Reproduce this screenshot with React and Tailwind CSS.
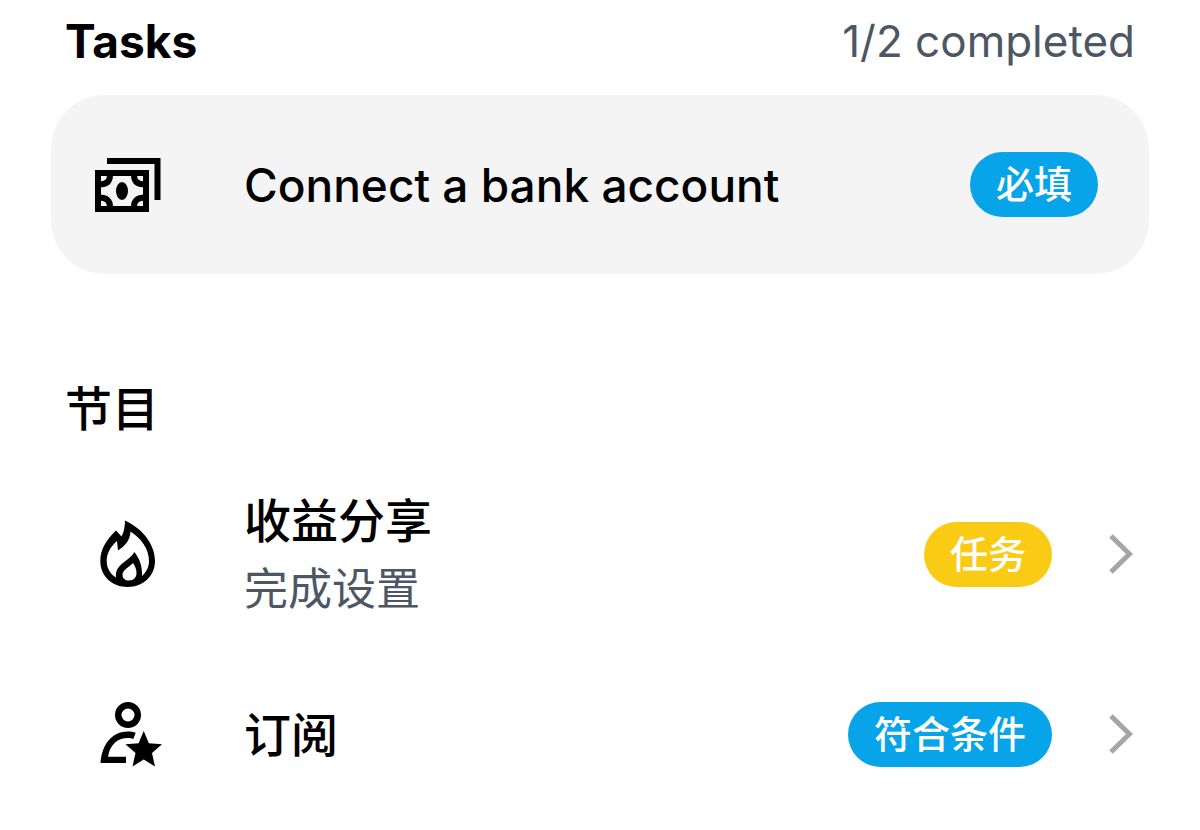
import clsx from 'clsx';

const CashIcon = () => (
  <svg viewBox="0 0 72 72" className="w-[72px] h-[72px] shrink-0" fill="none" stroke="currentColor" strokeWidth="6" aria-hidden="true">
    <path d="M15 12H65.5V51" />
    <path d="M6 24H54V60H6Z" />
    <path d="M18 26C18 32 15 35.500 7 35.500M42 26C42 32 45 35.500 53 35.500M18 58C18 52 15 48.500 7 48.500M42 58C42 52 45 48.500 53 48.500" />
    <ellipse cx="30" cy="42" rx="6" ry="9" fill="currentColor" stroke="none" />
  </svg>
);

const FlameIcon = () => (
  <svg viewBox="0 0 72 72" className="w-[72px] h-[72px] shrink-0" fill="currentColor" aria-hidden="true">
    <path
      fillRule="evenodd"
      d="M33 2.500C49 10 63 25 63 43C63 58 51 69 35.700 69C20 69 8.300 58 8.300 43C8.300 31 15 21 24 12.500L29.500 18.500C32 14 33 8 33 2.500ZM38.500 13.500C38 22 34 27 26 32.500L25 23C18 29 14.700 36 14.700 43C14.700 50 18 56 24 59.500C23 45 36 45 42.300 34C47 40 50.500 47 50 58C54.500 54 57 49 57 43C57 31 49 20 38.500 13.500ZM41 45C36 50 30.500 52 30.500 57C30.500 60.500 33 62.500 37 62.500C42 62.500 44.500 59 44.500 55C44.500 51 43 48 41 45Z"
    />
  </svg>
);

const SubscriberIcon = () => (
  <svg viewBox="0 0 72 72" className="w-[72px] h-[72px] shrink-0" fill="currentColor" aria-hidden="true">
    <circle cx="36" cy="17" r="9.75" fill="none" stroke="currentColor" strokeWidth="6.5" />
    <path d="M8.500 65C10 46 20 33.500 36 33.500C39 33.500 41.500 34 43.700 34.700L41.300 41C39.500 40.300 38 40 36 40C25 40 18 47 16 58.700H34V65Z" />
    <path d="M51.700 33L56.900 45.300L70 46.300L60 55L63 68.500L51.700 61.500L40.500 68.500L43.500 55L33.500 46.300L46.600 45.300Z" />
  </svg>
);

const Chevron = () => (
  <svg viewBox="0 0 24 40" className="w-6 h-10 ml-[57px] shrink-0 text-[#a5a5a7]" fill="none" stroke="currentColor" strokeWidth="5" aria-hidden="true">
    <path d="M2 2L20.500 20L2 38" />
  </svg>
);

const Badge = ({ color, children }) => (
  <span
    className={clsx(
      'shrink-0 rounded-full px-[26px] text-[38px] leading-[65px] font-medium text-white',
      color === 'yellow' ? 'bg-[#f9cb15]' : 'bg-[#08a4e9]'
    )}
  >
    {children}
  </span>
);

const programs = [
  { title: '收益分享', subtitle: '完成设置', badge: '任务', color: 'yellow', Icon: FlameIcon },
  { title: '订阅', badge: '符合条件', color: 'blue', Icon: SubscriberIcon },
];

const ProgramRow = ({ title, subtitle, badge, color, Icon }) => (
  <li>
    <button type="button" className="flex w-full h-[180px] items-center pl-[41px] pr-4 text-left">
      <Icon />
      <span className="ml-20 flex flex-1 flex-col pt-0.5">
        <span className="text-[47px] leading-[68px] font-medium">{title}</span>
        {subtitle && <span className="text-[44px] leading-[68px] text-[#4c5664]">{subtitle}</span>}
      </span>
      <Badge color={color}>{badge}</Badge>
      <Chevron />
    </button>
  </li>
);

const App = () => {
  return (
    <main className="bg-white px-[51px] text-black font-['Inter','Noto_Sans_CJK_SC',sans-serif]">
      <section>
        <div className="flex items-center justify-between px-[14px] pt-2 pb-[21px] leading-[66px]">
          <h1 className="text-[46px] font-bold">Tasks</h1>
          <p className="text-[44px] text-[#4c5664]">1/2 completed</p>
        </div>
        <button
          type="button"
          className="flex w-full h-[179px] items-center rounded-[54px] bg-[#f4f4f4] pl-[41px] pr-[51px] text-left"
        >
          <CashIcon />
          <span className="ml-20 flex-1 text-[46px] leading-[68px] font-medium">Connect a bank account</span>
          <Badge color="blue">必填</Badge>
        </button>
      </section>

      <section className="mt-[102px]">
        <h2 className="px-[14px] text-[47px] leading-[66px] font-medium">节目</h2>
        <ul className="mt-[22px]">
          {programs.map((program) => (
            <ProgramRow key={program.title} {...program} />
          ))}
        </ul>
      </section>
    </main>
  );
};

export default App;
